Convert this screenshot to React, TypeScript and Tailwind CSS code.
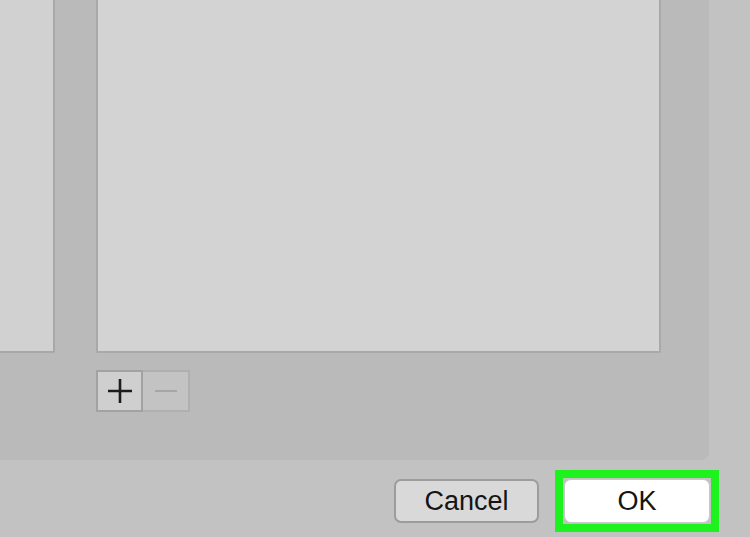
export default function App() {
  return (
    <div className="w-[750px] h-[537px] overflow-hidden bg-[#c2c2c2] font-['Liberation_Sans',Arial,sans-serif]">
      {/* group box */}
      <div className="w-[709px] h-[460px] bg-[#bababa] rounded-br-[8px] flex flex-col">
        <div className="flex items-start h-[353px]">
          <div className="w-[55px] h-[353px] bg-[#d1d1d1] border-r-2 border-b-2 border-[#a8a8a8] rounded-br-[2px]" />
          <div className="ml-[41px] w-[565px] h-[353px] bg-[#d3d3d3] border-l-2 border-r-2 border-b-2 border-[#a9a9a9] rounded-b-[2px]" />
        </div>
        <div className="ml-[96px] mt-[17px] flex">
          <button className="w-[47px] h-[42px] bg-[#cfcfcf] border-2 border-[#a2a2a2] flex items-center justify-center">
            <svg width="26" height="26" viewBox="0 0 26 26">
              <path d="M13 1v24M1 13h24" stroke="#1c1c1c" strokeWidth="2.6" />
            </svg>
          </button>
          <button className="w-[47px] h-[42px] bg-[#c3c3c3] border-2 border-l-0 border-[#b0b0b0] flex items-center justify-center">
            <svg width="24" height="4" viewBox="0 0 24 4">
              <path d="M1 2h22" stroke="#a6a6a6" strokeWidth="2" />
            </svg>
          </button>
        </div>
      </div>
      {/* footer buttons */}
      <div className="flex justify-end items-center pr-[31px] mt-[10px] gap-[16px]">
        <button className="w-[145px] h-[44px] rounded-[7px] bg-[#d9d9d9] border-2 border-[#9c9c9c] text-[27px] leading-none text-[#141414] flex items-center justify-center">
          Cancel
        </button>
        <div className="border-[8px] border-[#1ef21e] p-px">
          <button className="w-[146px] h-[44px] rounded-[7px] bg-white border border-[#c8c8c8] text-[27px] leading-none text-[#141414] flex items-center justify-center">
            OK
          </button>
        </div>
      </div>
    </div>
  );
}
